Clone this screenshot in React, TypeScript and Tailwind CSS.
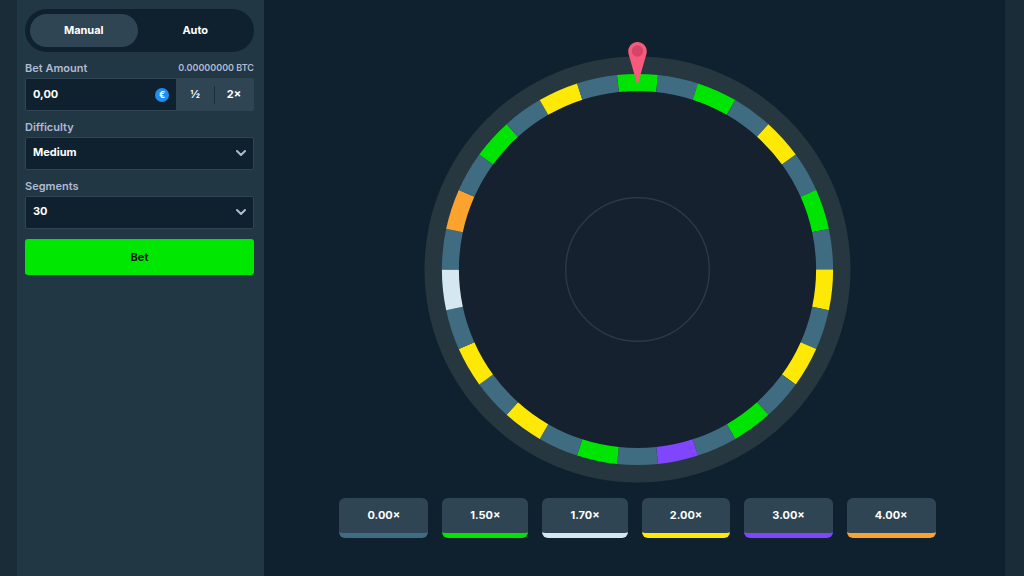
import { useState } from "react";
import { ChevronDown } from "lucide-react";

type Mode = "manual" | "auto";

const COLORS = {
  blue: "#406c82",
  green: "#00e403",
  white: "#d5e8f2",
  yellow: "#fde905",
  purple: "#7f46fd",
  orange: "#fca32f",
};

// clockwise from the pointer, every other segment pays nothing
const PAYING: (keyof typeof COLORS)[] = [
  "green", "green", "yellow", "green", "yellow", "yellow", "green", "purple",
  "green", "yellow", "yellow", "white", "orange", "green", "yellow",
];
const SEGMENTS = PAYING.flatMap((c) => [c, "blue" as const]);

const PAYOUTS = [
  { label: "0.00×", border: "border-[#406c82]" },
  { label: "1.50×", border: "border-[#00e403]" },
  { label: "1.70×", border: "border-[#d5e8f2]" },
  { label: "2.00×", border: "border-[#fde905]" },
  { label: "3.00×", border: "border-[#7f46fd]" },
  { label: "4.00×", border: "border-[#fca32f]" },
];

const OUTER = 195.6;
const INNER = 178.6;

function arcPath(index: number) {
  const step = (Math.PI * 2) / SEGMENTS.length;
  const from = (index - 0.5) * step;
  const to = (index + 0.5) * step;
  const point = (r: number, a: number) =>
    `${(r * Math.sin(a)).toFixed(2)} ${(-r * Math.cos(a)).toFixed(2)}`;
  return `M${point(OUTER, from)}A${OUTER} ${OUTER} 0 0 1 ${point(OUTER, to)}L${point(INNER, to)}A${INNER} ${INNER} 0 0 0 ${point(INNER, from)}Z`;
}

function Wheel() {
  return (
    <svg viewBox="-213.5 -227.5 427 441" className="w-full max-w-[427px]" role="img" aria-label="Wheel">
      <circle r="213" fill="#263740" />
      <circle r="190" fill="#15212e" />
      {SEGMENTS.map((color, i) => (
        <path key={i} d={arcPath(i)} fill={COLORS[color]} />
      ))}
      <circle r="71.8" fill="none" stroke="#2b3a46" strokeWidth="1.4" />
      <path d="M0 -227.5a9.3 9.3 0 0 1 9.1 11.2L0 -184L-9.1 -216.3A9.3 9.3 0 0 1 0 -227.5Z" fill="#f9597b" />
      <circle cy="-218.5" r="5.7" fill="#d4456a" />
    </svg>
  );
}

interface SelectFieldProps {
  id: string;
  label: string;
  options: string[];
  value: string;
  onChange: (value: string) => void;
}

function SelectField({ id, label, options, value, onChange }: SelectFieldProps) {
  return (
    <div className="mt-2">
      <label htmlFor={id} className="block leading-4 font-semibold text-[#b1bad3]">
        {label}
      </label>
      <div className="relative mt-[2px]">
        <select
          id={id}
          value={value}
          onChange={(e) => onChange(e.target.value)}
          className="w-full h-[33px] appearance-none rounded-xs border border-[#2f4553] bg-[#0f212e] px-[7px] pb-[2px] font-bold text-white focus:outline-none"
        >
          {options.map((o) => (
            <option key={o}>{o}</option>
          ))}
        </select>
        <ChevronDown
          className="pointer-events-none absolute right-[5px] top-2 size-4 text-[#b1bad3]"
          strokeWidth={3}
        />
      </div>
    </div>
  );
}

export default function App() {
  const [mode, setMode] = useState<Mode>("manual");
  const [amount, setAmount] = useState("0,00");
  const [difficulty, setDifficulty] = useState("Medium");
  const [segments, setSegments] = useState("30");

  return (
    <div className="min-h-screen flex bg-[#1a2c38] pl-[17px] pr-[19px] font-['Inter','Liberation_Sans',sans-serif] text-[11px] text-white">
      <aside className="w-[247px] shrink-0 bg-[#213743] pt-[9px] pl-2 pr-[10px]">
        <div className="flex h-[43px] gap-1 rounded-full bg-[#0f212e] p-[5px]">
          {(["manual", "auto"] as Mode[]).map((m) => (
            <button
              key={m}
              onClick={() => setMode(m)}
              className={`flex-1 rounded-full font-bold capitalize ${mode === m ? "bg-[#2f4553]" : ""}`}
            >
              {m}
            </button>
          ))}
        </div>

        <div className="mt-2 flex justify-between leading-4 font-semibold text-[#b1bad3]">
          <label htmlFor="amount">Bet Amount</label>
          <span className="text-[9px]">0.00000000 BTC</span>
        </div>
        <div className="mt-[2px] flex h-[33px] rounded-xs border border-[#2f4553] bg-[#2f4553]">
          <div className="flex min-w-0 flex-1 items-center bg-[#0f212e] px-[7px]">
            <input
              id="amount"
              value={amount}
              onChange={(e) => setAmount(e.target.value)}
              className="min-w-0 flex-1 bg-transparent font-bold focus:outline-none"
            />
            <span className="flex size-[14px] items-center justify-center rounded-full bg-[#1c8ff0] text-[9px] leading-none font-bold">
              €
            </span>
          </div>
          <div className="flex w-[77px] items-center">
            <button className="flex-1 font-bold">½</button>
            <span className="h-[18px] w-px bg-[#1a2c38]" />
            <button className="flex-1 font-bold">2×</button>
          </div>
        </div>

        <SelectField
          id="difficulty"
          label="Difficulty"
          options={["Low", "Medium", "High"]}
          value={difficulty}
          onChange={setDifficulty}
        />
        <SelectField
          id="segments"
          label="Segments"
          options={["10", "20", "30", "40", "50"]}
          value={segments}
          onChange={setSegments}
        />

        <button className="mt-[10px] h-9 w-full rounded-[3px] bg-[#00e701] font-bold text-[#05180c]">
          Bet
        </button>
      </aside>

      <main className="flex min-w-0 flex-1 flex-col items-center gap-[15px] bg-[#0f212e] pt-[42px] pl-[6px]">
        <Wheel />
        <div className="flex flex-wrap gap-[14px]">
          {PAYOUTS.map((p) => (
            <button
              key={p.label}
              className={`h-10 rounded-md border-b-[5px] bg-[#2f4553] px-7 font-bold ${p.border}`}
            >
              {p.label}
            </button>
          ))}
        </div>
      </main>
    </div>
  );
}
